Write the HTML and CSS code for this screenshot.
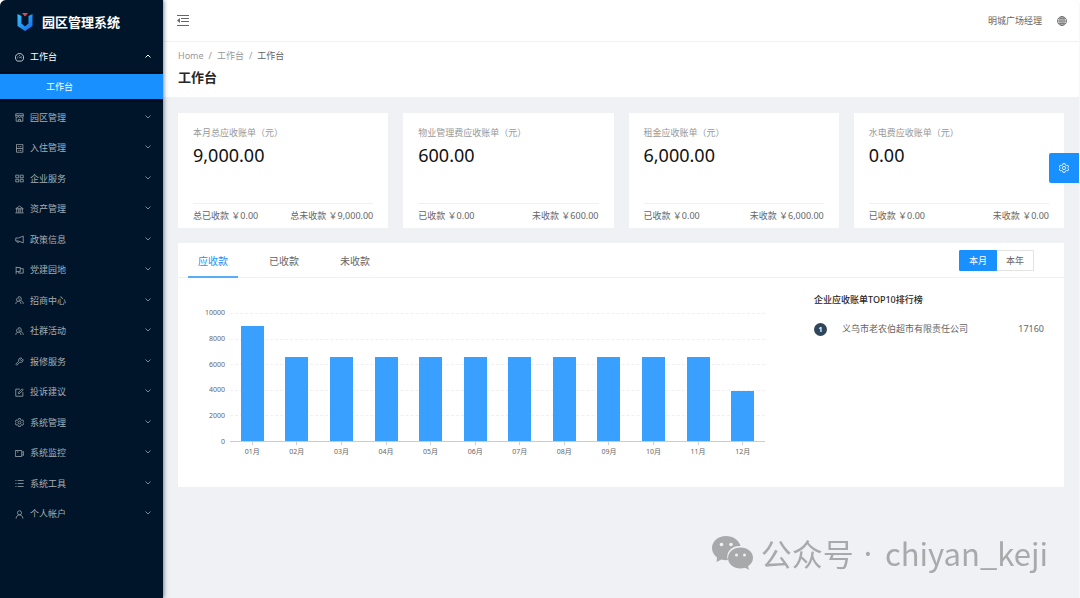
FILE: index.html
```html
<!DOCTYPE html>
<html lang="zh-CN">
<head>
<meta charset="utf-8">
<meta name="viewport" content="width=device-width, initial-scale=1">
<title>园区管理系统</title>
<link rel="stylesheet" href="styles.css">
</head>
<body>
<svg class="defs" aria-hidden="true">
  <symbol id="chev" viewBox="0 0 12 12"><path d="M1 3l5 5 5-5"/></symbol>
  <symbol id="dash" viewBox="0 0 24 24"><path d="M6 21.500a11 11 0 1 1 12 0zM11.500 14l5-5M12 5v2M5 13h2M7 8l1.300 1.300M17 13h2"/></symbol>
  <symbol id="shop" viewBox="0 0 24 24"><path d="M2 2h20v7c0 4-5 4-6.500 0-1 4-6 4-7 0C7 13 2 13 2 9zM2 7h20M3 12v10h18V12M9 22v-5h6v5"/></symbol>
  <symbol id="check" viewBox="0 0 24 24"><path d="M4 1h17v21H4zM4 12h17M8 7h2M12 7h5M8 17h2M12 17h5"/></symbol>
  <symbol id="apps" viewBox="0 0 24 24"><path d="M2 3h8v7H2zM14 3h8v7h-8zM2 14h8v7H2zM14 14h8v7h-8z"/></symbol>
  <symbol id="bank" viewBox="0 0 24 24"><path d="M2 10l10-7 10 7zM4.500 10v10M10 10v10M14 10v10M19.500 10v10M1 21h22"/></symbol>
  <symbol id="horn" viewBox="0 0 24 24"><path d="M22 3v18L9 16H2V8h7zM5 16c0 5 6 5 6 1"/></symbol>
  <symbol id="flag" viewBox="0 0 24 24"><path d="M3 2v20M3 4h11v11H3M14 7h8v12H10v-4"/></symbol>
  <symbol id="team" viewBox="0 0 24 24"><path d="M2 21c0-4 3-7 7-7s7 3 7 7M9 14a4.500 4.500 0 1 1 2-8M8 3c3-2 9-1 9 4 0 3-2 5-4 5M15 12c4 1 7 4 7 9M13 7c-3 2-2 5 1 6"/></symbol>
  <symbol id="tool" viewBox="0 0 24 24"><path d="M21 6l-4 4-3-3 4-4c-6-2-10 3-8 8l-8 8 3 3 8-8c5 2 10-2 8-8z"/></symbol>
  <symbol id="form" viewBox="0 0 24 24"><path d="M13 3H2v19h19V11M9 15l1-4 9-9 3 3-9 9z"/></symbol>
  <symbol id="gear" viewBox="0 0 24 24"><path d="M9.500 1.500h5l1 3.500 2 1.200 3.500-1 2.300 4.300-2.600 2.500 2.600 2.500L21 19l-3.500-1-2 1.200-1 3.300h-5l-1-3.300-2-1.200L3 19 .7 14.500 3.300 12 .7 9.500 3 5.200l3.500 1 2-1.200z"/><circle cx="12" cy="12" r="3.800"/></symbol>
  <symbol id="video" viewBox="0 0 24 24"><path d="M1 4h17v16H1zM18 9l5-2v10l-5-2M5 8h4"/></symbol>
  <symbol id="list" viewBox="0 0 24 24"><path d="M7 4h16M7 12h16M7 20h16M1 4h3M1 12h3M1 20h3"/></symbol>
  <symbol id="user" viewBox="0 0 24 24"><circle cx="12" cy="7.500" r="5.500"/><path d="M3 23c0-6 4-10 9-10s9 4 9 10"/></symbol>
  <symbol id="globe" viewBox="0 0 24 24"><circle cx="12" cy="12" r="10.800"/><ellipse cx="12" cy="12" rx="5" ry="10.800"/><path d="M12 1v22M1 12h22M3 6.500h18M3 17.500h18"/></symbol>
</svg>
<div class="app">
  <aside class="side">
    <div class="brand">
      <svg class="logo" viewBox="0 0 16 18" aria-hidden="true">
        <defs><linearGradient id="lg" x1="0" x2="1" y1="0" y2="1"><stop offset="0" stop-color="#35c5fa"/><stop offset="1" stop-color="#1266ee"/></linearGradient></defs>
        <path fill="url(#lg)" d="M0.500 1l4 2v7.500L8 13.500l3.500-3V3l4-2v12L8 18 .5 13z"/>
        <path fill="#ef4458" d="M5 0h6L8 3.500z"/>
      </svg>
      <span>园区管理系统</span>
    </div>
    <nav>
      <button class="item open"><svg class="ico"><use href="#dash"/></svg><span>工作台</span><svg class="chev up"><use href="#chev"/></svg></button>
      <div class="sub"><a href="#" class="current">工作台</a></div>
      <div class="menu">
        <button class="item"><svg class="ico"><use href="#shop"/></svg><span>园区管理</span><svg class="chev"><use href="#chev"/></svg></button>
        <button class="item"><svg class="ico"><use href="#check"/></svg><span>入住管理</span><svg class="chev"><use href="#chev"/></svg></button>
        <button class="item"><svg class="ico"><use href="#apps"/></svg><span>企业服务</span><svg class="chev"><use href="#chev"/></svg></button>
        <button class="item"><svg class="ico"><use href="#bank"/></svg><span>资产管理</span><svg class="chev"><use href="#chev"/></svg></button>
        <button class="item"><svg class="ico"><use href="#horn"/></svg><span>政策信息</span><svg class="chev"><use href="#chev"/></svg></button>
        <button class="item"><svg class="ico"><use href="#flag"/></svg><span>党建园地</span><svg class="chev"><use href="#chev"/></svg></button>
        <button class="item"><svg class="ico"><use href="#team"/></svg><span>招商中心</span><svg class="chev"><use href="#chev"/></svg></button>
        <button class="item"><svg class="ico"><use href="#team"/></svg><span>社群活动</span><svg class="chev"><use href="#chev"/></svg></button>
        <button class="item"><svg class="ico"><use href="#tool"/></svg><span>报修服务</span><svg class="chev"><use href="#chev"/></svg></button>
        <button class="item"><svg class="ico"><use href="#form"/></svg><span>投诉建议</span><svg class="chev"><use href="#chev"/></svg></button>
        <button class="item"><svg class="ico"><use href="#gear"/></svg><span>系统管理</span><svg class="chev"><use href="#chev"/></svg></button>
        <button class="item"><svg class="ico"><use href="#video"/></svg><span>系统监控</span><svg class="chev"><use href="#chev"/></svg></button>
        <button class="item"><svg class="ico"><use href="#list"/></svg><span>系统工具</span><svg class="chev"><use href="#chev"/></svg></button>
        <button class="item"><svg class="ico"><use href="#user"/></svg><span>个人帐户</span><svg class="chev"><use href="#chev"/></svg></button>
      </div>
    </nav>
  </aside>
  <div class="main">
    <header class="top">
      <button class="fold" aria-label="收起菜单"><svg viewBox="0 0 12 11"><path d="M0 .5h12M4 3.500h8M4 6.500h8M0 10.500h12"/><path class="tri" d="M0 5.500l3-2.500v5z"/></svg></button>
      <div class="account"><span>明城广场经理</span><button aria-label="语言"><svg class="globe"><use href="#globe"/></svg></button></div>
    </header>
    <div class="head">
      <nav class="crumbs"><a href="#">Home</a><i>/</i><a href="#">工作台</a><i>/</i><span>工作台</span></nav>
      <h1>工作台</h1>
    </div>
    <main class="content">
      <section class="cards">
        <article class="card"><h2>本月总应收账单<span lang="zh-Hant">（元）</span></h2><p class="value">9,000.00</p><footer><span>总已收款 ￥0.00</span><span>总未收款 ￥9,000.00</span></footer></article>
        <article class="card"><h2>物业管理费应收账单<span lang="zh-Hant">（元）</span></h2><p class="value">600.00</p><footer><span>已收款 ￥0.00</span><span>未收款 ￥600.00</span></footer></article>
        <article class="card"><h2>租金应收账单<span lang="zh-Hant">（元）</span></h2><p class="value">6,000.00</p><footer><span>已收款 ￥0.00</span><span>未收款 ￥6,000.00</span></footer></article>
        <article class="card"><h2>水电费应收账单<span lang="zh-Hant">（元）</span></h2><p class="value">0.00</p><footer><span>已收款 ￥0.00</span><span>未收款 ￥0.00</span></footer></article>
      </section>
      <section class="panel">
        <div class="tabs">
          <button class="tab on">应收款</button><button class="tab">已收款</button><button class="tab">未收款</button>
          <div class="range"><button class="on">本月</button><button>本年</button></div>
        </div>
        <div class="body">
          <div class="chart">
            <div class="yaxis"><span>10000</span><span>8000</span><span>6000</span><span>4000</span><span>2000</span><span>0</span></div>
            <div class="plot">
              <div class="lines"><i></i><i></i><i></i><i></i><i></i></div>
              <div class="bars">
                <b style="height:90%"></b><b style="height:66%"></b><b style="height:66%"></b><b style="height:66%"></b><b style="height:66%"></b><b style="height:66%"></b><b style="height:66%"></b><b style="height:66%"></b><b style="height:66%"></b><b style="height:66%"></b><b style="height:66%"></b><b style="height:39%"></b>
              </div>
            </div>
            <div class="xaxis"><span>01月</span><span>02月</span><span>03月</span><span>04月</span><span>05月</span><span>06月</span><span>07月</span><span>08月</span><span>09月</span><span>10月</span><span>11月</span><span>12月</span></div>
          </div>
          <div class="rank">
            <h3>企业应收账单TOP10排行榜</h3>
            <ol><li><span class="num">1</span><span class="name">义乌市老农伯超市有限责任公司</span><span>17160</span></li></ol>
          </div>
        </div>
      </section>
    </main>
  </div>
</div>
<button class="setting" aria-label="设置"><svg><use href="#gear"/></svg></button>
<div class="mark">
  <svg viewBox="0 0 42 36" aria-hidden="true">
    <path d="M15 1C7 1 1 6.500 1 13c0 4 2 7 5 9.500L5.500 27l5-2.500c2 .6 4 .8 6.500.6C14 17 21 10.500 29.500 11 28 5 22 1 15 1z"/>
    <path d="M29.500 12.500C22.500 12.500 17 17 17 23s5.500 10.500 12.500 10.500c1.500 0 3-.2 4.500-.7l4 2-1-3.500c3-2 5-5 5-8.300 0-6-5.500-10.500-12.500-10.500z"/>
    <g class="eye"><circle cx="10.500" cy="9.500" r="1.800"/><circle cx="20" cy="9.500" r="1.800"/><circle cx="25.500" cy="20" r="1.500"/><circle cx="33.500" cy="20" r="1.500"/></g>
  </svg>
  <span>公众号</span><span class="dot">·</span><span>chiyan_keji</span>
</div>
</body>
</html>
```

FILE: styles.css
```css
* { box-sizing: border-box; }
body, h1, h2, h3, p, ol { margin: 0; padding: 0; }
body {
  font: 9px/14px "Noto Sans", "Noto Sans CJK SC", sans-serif;
  color: #666;
  background: #fff;
}
button { font: inherit; color: inherit; border: 0; padding: 0; background: none; cursor: pointer; }
a { color: inherit; text-decoration: none; }
svg { fill: none; stroke: currentColor; display: block; }
.defs { position: absolute; width: 0; height: 0; }
.app {
  display: flex;
  min-height: 100vh;
  border-right: 1px solid #f7f7f8;
  border-radius: 6px 6px 0 0;
  overflow: hidden;
  background: #f0f1f5;
}

.side {
  flex: 0 0 163px;
  background: #001529;
  color: #a6adb4;
  box-shadow: 1px 0 4px rgba(0, 21, 41, .5);
  z-index: 1;
}
.brand {
  display: flex;
  align-items: center;
  gap: 9px;
  height: 42px;
  padding: 1px 0 0 17px;
  color: #fff;
  font-size: 13px;
  font-weight: 700;
}
.logo { width: 16px; height: 18px; stroke: none; }
.item {
  display: flex;
  align-items: center;
  width: 100%;
  height: 30px;
  padding: 0 12px 0 15px;
  text-align: left;
}
.item span { flex: 1; padding-left: 6px; }
.ico { width: 9px; height: 9px; stroke-width: 2; }
.chev { width: 6px; height: 6px; margin-bottom: 2px; stroke-width: 2; opacity: .75; }
.up { transform: rotate(180deg); opacity: 1; }
.open { color: #fff; }
.sub { padding: 2px 0 3px; background: #000c17; }
.current {
  display: block;
  padding: 6px 0 5px 46px;
  color: #fff;
  background: #1890ff;
}
.menu .item:nth-child(odd) { height: 31px; }

.main { flex: 1; min-width: 0; }
.top {
  display: flex;
  justify-content: space-between;
  align-items: center;
  height: 41px;
  padding: 0 12px 0 14px;
  background: #fff;
}
.fold svg { width: 12px; height: 11px; }
.fold .tri { fill: currentColor; stroke: none; }
.account { display: flex; align-items: center; gap: 15px; }
.globe { width: 10px; height: 10px; stroke-width: 2; }
.head {
  padding: 7px 15px 10px;
  border-top: 1px solid #f0f1f3;
  background: #fff;
}
.crumbs { display: flex; gap: 5px; color: #999; }
.crumbs i { font-style: normal; }
.crumbs span { color: #666; }
h1 { margin-top: 5px; font-size: 13px; line-height: 19px; color: #262626; }

.content { padding: 16px 15px; }
.cards { display: grid; grid-template-columns: repeat(4, 1fr); gap: 15px; }
.card { padding: 13px 15px 5px; background: #fff; }
h2 { font-size: 9px; font-weight: 400; color: #999; }
h2 span { font-family: "Noto Sans CJK TC", sans-serif; }
.value { margin-top: 2px; font-size: 18px; line-height: 26px; color: #111; }
.card footer {
  display: flex;
  justify-content: space-between;
  margin-top: 35px;
  padding-top: 5px;
  border-top: 1px solid #f0f0f0;
}

.panel { margin-top: 15px; background: #fff; }
.tabs {
  display: flex;
  gap: 21px;
  height: 35px;
  padding: 0 30px 0 10px;
  border-bottom: 1px solid #f0f0f0;
}
.tab { height: 35px; padding: 2px 10px 0; border-bottom: 2px solid transparent; font-size: 10px; }
.tab.on { color: #1890ff; border-color: #57adf8; }
.range { display: flex; align-self: center; margin-left: auto; }
.range button { height: 21px; padding: 1px 9px 0; border: 1px solid #e3e3e3; border-left: 0; border-radius: 0 1px 1px 0; }
.range .on { color: #fff; background: #1890ff; border-color: #1890ff; border-left: 1px solid #1890ff; border-radius: 1px 0 0 1px; }
.body {
  display: grid;
  grid-template-columns: 587px 1fr;
  column-gap: 49px;
  padding: 14px 20px 30px 0;
}
.chart {
  display: grid;
  grid-template-columns: 47px 1fr;
  grid-template-rows: 129px auto;
  gap: 0 5px;
  padding-top: 21px;
  font-size: 7px;
  line-height: 10px;
}
.yaxis { display: flex; flex-direction: column; justify-content: space-between; margin: -5px 0; text-align: right; }
.plot { display: grid; border-bottom: 1px solid #ccc; }
.lines, .bars { grid-area: 1 / 1; display: flex; }
.lines { flex-direction: column; }
.lines i { flex: 1; border-top: 1px dashed #f0f0f0; }
.bars { align-items: flex-end; justify-content: space-around; }
.bars b { width: 23px; background: #3aa0ff; z-index: 1; }
.xaxis { grid-column: 2; display: grid; grid-template-columns: repeat(12, 1fr); text-align: center; }
.xaxis span::before { content: ""; display: block; width: 1px; height: 3px; margin: 0 auto 2px; background: #ccc; }
h3 { margin-top: 1px; font-size: 9px; font-weight: 500; color: #262626; }
ol { list-style: none; }
.rank li { display: flex; align-items: center; margin-top: 15px; }
.num { width: 13px; border-radius: 7px; line-height: 13px; text-align: center; font-size: 7px; font-weight: 700; color: #fff; background: #314659; }
.name { flex: 1; padding-left: 15px; }

.setting {
  position: fixed;
  right: 1px;
  top: 153px;
  z-index: 2;
  display: grid;
  place-items: center;
  width: 30px;
  height: 30px;
  border-radius: 2px 0 0 2px;
  color: #fff;
  background: #1890ff;
}
.setting svg { width: 10px; height: 10px; stroke-width: 2; }
.mark {
  position: fixed;
  right: 32px;
  bottom: 23px;
  display: flex;
  align-items: center;
  gap: 8px;
  font: 31px/44px "Noto Sans CJK SC", sans-serif;
  color: #a8a9ab;
}
.mark svg { width: 42px; height: 36px; fill: #a8a9ab; stroke: none; }
.mark .dot { padding: 0 5px 0 2px; font-family: "Noto Sans", sans-serif; }
.mark .eye { fill: #f0f1f5; }
```
